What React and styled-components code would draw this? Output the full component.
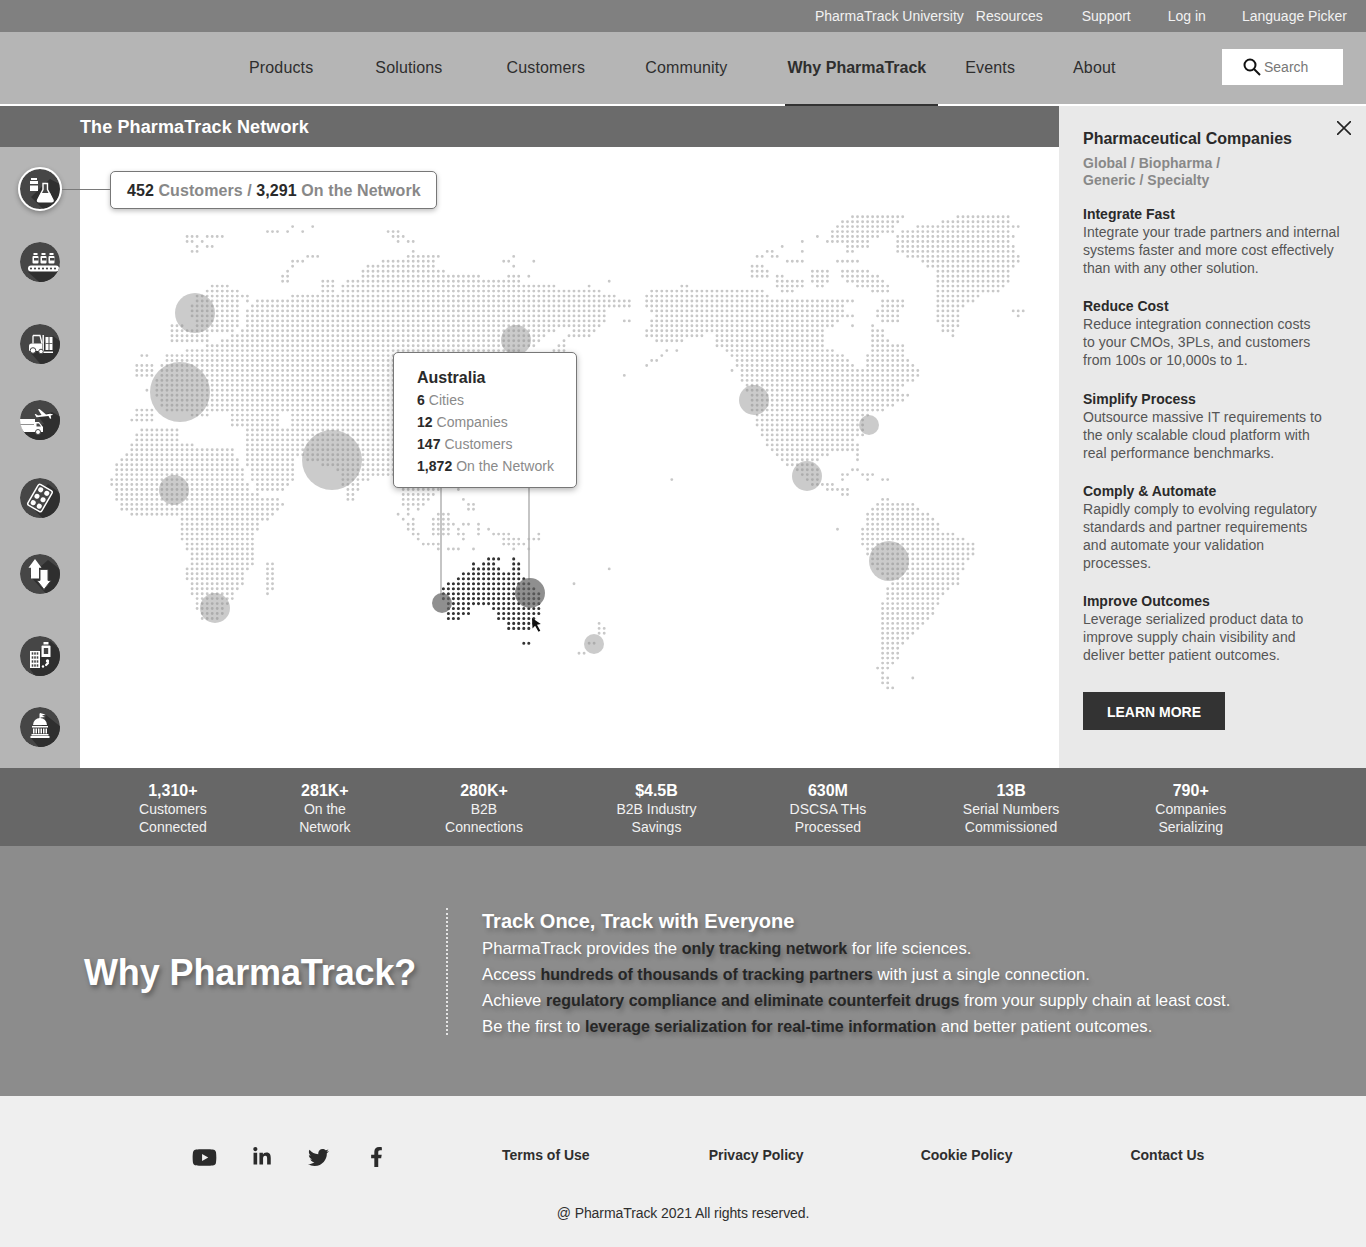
import React, { useMemo } from 'react'
import styled, { createGlobalStyle } from 'styled-components'
import { FaYoutube, FaLinkedinIn, FaTwitter, FaFacebookF } from 'react-icons/fa'

const GlobalStyle = createGlobalStyle`
  html, body {
    margin: 0;
    padding: 0;
    background: #fff;
    font-family: "Liberation Sans", Arial, sans-serif;
  }
  * { box-sizing: border-box; }
`

const Page = styled.div`
  width: 1366px;
  height: 1247px;
  overflow: hidden;
`

/* header */

const TopBar = styled.div`
  display: flex;
  justify-content: flex-end;
  align-items: center;
  height: 32px;
  padding-right: 19px;
  background: #808080;
`

const TopLink = styled.a`
  margin-left: ${props => props.$gap}px;
  font-size: 14px;
  color: #f2f2f2;
`

const NavBar = styled.nav`
  position: relative;
  display: flex;
  align-items: center;
  height: 74px;
  padding-left: 249px;
  background: #b5b5b5;
  border-bottom: 2px solid #fff;
`

const NavItem = styled.a`
  position: relative;
  margin-left: ${props => props.$gap}px;
  font-size: 16px;
  letter-spacing: ${props => (props.$active ? 0 : 0.15)}px;
  font-weight: ${props => (props.$active ? 700 : 400)};
  color: #2e2e2e;

  ${props =>
    props.$active &&
    `
    &::after {
      content: '';
      position: absolute;
      left: -2px;
      right: -12px;
      top: 45px;
      height: 2px;
      background: #333;
    }
  `}
`

const SearchBox = styled.div`
  position: absolute;
  left: 1222px;
  top: 17px;
  display: flex;
  align-items: center;
  gap: 3px;
  width: 121px;
  height: 36px;
  padding-left: 21px;
  background: #fff;
  font-size: 14px;
  color: #777;
`

/* main area */

const Main = styled.div`
  display: grid;
  grid-template-columns: 1059px 307px;
  height: 662px;
`

const NetworkColumn = styled.section`
  display: flex;
  flex-direction: column;
`

const TitleBar = styled.h1`
  display: flex;
  align-items: center;
  height: 41px;
  margin: 0;
  padding: 2px 0 0 80px;
  background: #6b6b6b;
  font-size: 18px;
  letter-spacing: 0.12px;
  font-weight: 700;
  color: #fff;
`

const NetworkBody = styled.div`
  position: relative;
  display: flex;
  flex: 1;
`

const Sidebar = styled.div`
  display: flex;
  flex-direction: column;
  align-items: center;
  width: 80px;
  background: #b5b5b5;
`

const BadgeWrap = styled.div`
  display: flex;
  justify-content: center;
  align-items: center;
  width: 40px;
  height: 40px;
  margin-top: ${props => props.$top}px;
  border-radius: 50%;
  ${props =>
    props.$active &&
    `
    outline: 2px solid #fff;
    box-shadow: 0 2px 5px 2px rgba(0, 0, 0, 0.3);
  `}
`

const Connector = styled.div`
  position: absolute;
  z-index: 1;
  left: 62px;
  top: 42px;
  width: 48px;
  height: 1px;
  background: #7a7a7a;
`

const Canvas = styled.div`
  position: relative;
  flex: 1;
  background: #fff;
`

const MapSvg = styled.svg`
  display: block;
  width: 979px;
  height: 621px;
`

const Callout = styled.div`
  position: absolute;
  left: 30px;
  top: 24px;
  display: flex;
  align-items: center;
  width: 327px;
  height: 38px;
  padding: 1px 0 0 16px;
  background: #fff;
  border: 1px solid #777;
  border-radius: 5px;
  box-shadow: 0 2px 5px rgba(0, 0, 0, 0.25);
  font-size: 16px;
  letter-spacing: 0.08px;
  font-weight: 700;
  color: #888;
`

const Num = styled.span`
  color: #2a2a2a;
  font-weight: 700;
`

const CountryCard = styled.div`
  position: absolute;
  left: 313px;
  top: 205px;
  width: 184px;
  height: 136px;
  padding: 15px 0 0 23px;
  background: #fff;
  border: 1px solid #777;
  border-radius: 5px;
  box-shadow: 0 2px 6px rgba(0, 0, 0, 0.3);
`

const CardTitle = styled.div`
  margin-bottom: 1px;
  font-size: 16px;
  line-height: 20px;
  font-weight: 700;
  color: #2a2a2a;
`

const CardRow = styled.div`
  font-size: 14px;
  line-height: 22px;
  letter-spacing: 0.04px;
  color: #8a8a8a;
`

const DetailPanel = styled.aside`
  position: relative;
  padding: 23px 0 0 24px;
  background: #e9e9e9;
`

const CloseIcon = styled.svg`
  position: absolute;
  right: 15px;
  top: 15px;
  width: 14px;
  height: 14px;
`

const PanelTitle = styled.h2`
  margin: 0;
  font-size: 16px;
  line-height: 20px;
  font-weight: 700;
  color: #2a2a2a;
`

const PanelSub = styled.div`
  margin: 6px 0 16px;
  font-size: 14px;
  line-height: 17px;
  letter-spacing: 0.05px;
  font-weight: 700;
  color: #888;
`

const Benefit = styled.div`
  margin-bottom: ${props => props.$after}px;
  font-size: 14px;
  line-height: 18px;
  letter-spacing: 0.05px;
  color: #555;
`

const BenefitTitle = styled.div`
  font-weight: 700;
  color: #2a2a2a;
  letter-spacing: 0;
`

const LearnMore = styled.button`
  display: block;
  width: 142px;
  height: 38px;
  margin-top: 28px;
  padding: 1px 0 0;
  background: #333;
  border: none;
  font-family: inherit;
  font-size: 14px;
  font-weight: 700;
  color: #fff;
`

/* stats */

const StatsBar = styled.div`
  display: flex;
  height: 78px;
  padding: 14px 0 0 139px;
  background: #676767;
`

const Stat = styled.div`
  margin-left: ${props => props.$gap}px;
  text-align: center;
  font-size: 14px;
  line-height: 18px;
  color: #f2f2f2;
`

const StatValue = styled.div`
  font-size: 16px;
  font-weight: 700;
  color: #fff;
`

/* why section */

const WhySection = styled.section`
  display: flex;
  align-items: flex-start;
  height: 250px;
  padding: 62px 0 0 84px;
  background: #8c8c8c;
`

const WhyTitle = styled.h2`
  width: 362px;
  margin: 44px 0 0;
  font-size: 36px;
  letter-spacing: -0.12px;
  line-height: 42px;
  font-weight: 700;
  color: #fff;
  text-shadow: 2px 3px 5px rgba(0, 0, 0, 0.35);
`

const WhyCopy = styled.div`
  height: 127px;
  padding-left: 34px;
  border-left: 2px dotted #e4e4e4;
  font-size: 16.7px;
  line-height: 26px;
  color: #fff;
  text-shadow: 2px 3px 5px rgba(0, 0, 0, 0.3);
`

const WhyHeading = styled.div`
  margin-bottom: 2px;
  font-size: 20px;
  font-weight: 700;
`

const Strong = styled.span`
  font-size: 16px;
  font-weight: 700;
  color: #262626;
`

/* footer */

const Footer = styled.footer`
  height: 151px;
  padding-top: 49px;
  background: #efefef;
  color: #2e2e2e;
`

const FooterRow = styled.div`
  display: flex;
  align-items: center;
  height: 20px;
  padding-left: 192px;
`

const Social = styled.a`
  display: flex;
  justify-content: center;
  width: ${props => props.$w}px;
  margin-right: ${props => props.$gap}px;
  margin-top: 4px;
  font-size: ${props => props.$size}px;
  color: #2b2b2b;
`

const FooterLink = styled.a`
  margin-left: ${props => props.$gap}px;
  font-size: 14px;
  font-weight: 700;
`

const Copyright = styled.div`
  margin-top: 39px;
  text-align: center;
  font-size: 14px;
  letter-spacing: -0.08px;
  line-height: 18px;
`

/* map data, all in page pixels */

const fromZoom = (ox, oy, pts) => pts.map(([x, y]) => [ox + x / 3, oy + y / 3])

const WEST_POLYGONS = [
  // Scandinavia
  [[195, 297], [210, 285], [228, 285], [250, 295], [250, 303], [240, 300], [240, 330], [212, 335], [208, 342], [170, 345], [166, 332], [175, 322], [195, 330], [190, 310]],
  // Russia, Asia and India
  [[208, 345], [243, 330], [248, 305], [263, 297], [322, 295], [322, 277], [337, 277], [338, 295], [345, 277], [360, 277], [358, 270], [377, 262], [390, 257], [440, 255], [437, 266], [423, 268], [450, 272], [480, 272], [478, 279], [540, 282], [560, 287], [610, 292], [618, 297], [635, 302], [628, 310], [605, 308], [608, 324], [563, 328], [548, 333], [543, 342], [520, 352], [470, 420], [440, 488], [432, 496], [420, 510], [403, 506], [403, 488], [393, 477], [365, 480], [357, 495], [350, 507], [343, 485], [338, 470], [323, 465], [305, 462], [303, 455], [285, 455], [280, 440], [245, 440], [245, 428], [288, 428], [288, 415], [275, 412], [208, 412]],
  [[572, 325], [600, 325], [590, 338], [573, 338]],
  [[228, 410], [278, 410], [278, 427], [228, 427]],
  // Europe
  [[165, 355], [208, 345], [208, 420], [190, 420], [190, 410], [165, 415], [155, 395], [158, 370]],
  [[135, 410], [152, 410], [152, 425], [130, 425]],
  [[132, 365], [152, 365], [152, 378], [132, 375]],
  [[140, 352], [147, 352], [147, 360], [140, 360]],
  // Africa, Arabia, Madagascar
  [[140, 428], [178, 428], [180, 443], [195, 445], [230, 447], [237, 455], [243, 470], [250, 490], [262, 495], [285, 500], [282, 507], [270, 518], [262, 524], [255, 533], [255, 545], [257, 563], [247, 573], [240, 590], [230, 603], [217, 622], [200, 618], [190, 590], [185, 573], [190, 560], [185, 545], [180, 535], [180, 520], [170, 515], [130, 515], [120, 510], [115, 495], [110, 480], [115, 465], [120, 460], [130, 445]],
  [[243, 430], [280, 430], [297, 470], [297, 480], [285, 490], [255, 490], [247, 465]],
  [[265, 563], [276, 563], [276, 580], [270, 595], [264, 595]],
]

// [zoomY, zoomX start, zoomX end], relative to the crop at 380,340
const ISLAND_RUNS = [
  [450, 70, 150], [450, 235, 235], [465, 70, 70], [465, 115, 150], [480, 70, 70], [480, 115, 150], [480, 250, 250],
  [495, 85, 85], [495, 265, 280], [510, 85, 85], [510, 265, 280], [525, 55, 55], [525, 85, 85], [525, 175, 205],
  [540, 70, 70], [540, 100, 100], [540, 160, 205], [552, 85, 100], [552, 160, 220], [552, 250, 265], [552, 295, 295],
  [567, 85, 100], [567, 160, 205], [567, 235, 235], [567, 295, 295], [567, 325, 325], [582, 100, 115], [582, 160, 205],
  [582, 235, 250], [582, 295, 295], [582, 340, 385], [582, 470, 470], [597, 115, 115], [597, 250, 250], [597, 370, 415],
  [597, 445, 475], [612, 130, 160], [612, 175, 175], [612, 370, 430], [627, 175, 175], [627, 205, 235], [627, 280, 280],
  [627, 400, 400], [627, 445, 445], [105, 727, 727], [687, 682, 682], [730, 577, 577], [850, 650, 650], [865, 650, 665],
  [880, 650, 665], [910, 620, 635], [940, 590, 605],
]

const WEST_STRAYS = [
  // northern islands
  ...[[555, 408], [570, 408], [585, 408], [615, 408], [630, 408], [645, 408], [660, 408], [555, 423], [570, 423], [600, 423], [585, 438], [615, 438], [630, 438], [570, 453], [585, 453], [795, 395], [825, 395], [840, 395], [870, 395], [915, 395], [885, 380], [945, 380], [930, 468], [945, 468], [960, 468], [885, 483], [900, 483], [915, 483], [885, 498], [870, 513], [855, 528], [870, 528], [855, 543], [870, 543], [1165, 395], [1180, 395], [1195, 395], [1180, 410], [1195, 410], [1210, 410], [1195, 423], [1225, 423], [1240, 423], [1240, 453]].map(([x, y]) => [x / 3, 100 + y / 3]),
  // east of Siberia
  ...[[370, 125], [385, 125], [400, 110], [400, 140], [460, 125], [385, 170], [400, 170], [415, 170], [445, 170], [695, 185], [620, 200], [740, 302], [755, 302], [560, 350], [575, 350], [545, 365], [530, 380], [545, 380], [515, 395], [530, 395], [545, 395]].map(([x, y]) => [380 + x / 3, 220 + y / 3]),
  [145, 390],
]

const EAST_POLYGONS = [
  // North America
  fromZoom(640, 200, [[15, 285], [30, 268], [145, 255], [150, 268], [365, 268], [395, 285], [390, 300], [620, 300], [620, 345], [575, 380], [560, 385], [560, 450], [575, 450], [605, 465], [635, 480], [650, 510], [680, 495], [690, 375], [740, 390], [745, 420], [790, 430], [800, 475], [830, 495], [845, 520], [830, 545], [790, 560], [760, 580], [810, 585], [790, 605], [740, 630], [700, 640], [680, 660], [670, 710], [650, 720], [660, 750], [620, 755], [590, 750], [545, 775], [530, 780], [530, 790], [545, 850], [600, 855], [635, 875], [630, 900], [600, 880], [570, 870], [510, 860], [480, 820], [435, 795], [405, 765], [390, 745], [360, 710], [345, 660], [330, 620], [315, 555], [285, 495], [270, 465], [225, 435], [225, 405], [160, 410], [135, 410], [125, 425], [50, 425], [15, 410], [20, 380], [45, 345], [15, 330]]),
  // Arctic Canada
  fromZoom(640, 200, [[330, 195], [380, 195], [385, 240], [330, 235]]),
  fromZoom(640, 200, [[405, 225], [500, 240], [490, 270], [420, 280], [405, 260]]),
  fromZoom(640, 200, [[510, 210], [575, 210], [555, 280], [510, 240]]),
  fromZoom(640, 200, [[600, 210], [690, 210], [755, 260], [755, 285], [680, 270], [600, 240]]),
  fromZoom(640, 200, [[540, 290], [650, 290], [640, 305], [540, 300]]),
  fromZoom(640, 200, [[715, 290], [800, 300], [790, 320], [775, 365], [730, 365], [700, 335], [720, 320]]),
  fromZoom(640, 200, [[640, 45], [800, 45], [755, 100], [720, 110], [670, 130], [690, 140], [640, 145], [560, 125], [570, 95], [600, 65]]),
  // Greenland and Iceland
  fromZoom(640, 200, [[940, 35], [1030, 35], [1110, 50], [1105, 65], [1150, 80], [1110, 95], [1135, 110], [1110, 125], [1135, 155], [1135, 185], [1120, 205], [1105, 245], [1080, 275], [1020, 290], [1000, 305], [970, 320], [960, 365], [940, 410], [910, 395], [895, 375], [880, 320], [880, 210], [835, 185], [810, 170], [760, 165], [760, 125], [785, 95], [830, 80], [905, 65], [940, 50]]),
  fromZoom(640, 200, [[1105, 318], [1155, 318], [1155, 335], [1135, 350], [1105, 335]]),
  // South America
  fromZoom(640, 200, [[720, 897], [750, 897], [815, 910], [860, 940], [890, 955], [905, 990], [935, 1000], [975, 1015], [1005, 1030], [1005, 1060], [985, 1080], [965, 1120], [960, 1150], [915, 1180], [900, 1215], [870, 1260], [840, 1285], [825, 1305], [785, 1345], [770, 1390], [740, 1420], [750, 1450], [770, 1465], [735, 1465], [718, 1445], [715, 1410], [700, 1405], [715, 1390], [715, 1285], [730, 1190], [745, 1150], [700, 1100], [660, 1030], [670, 970], [685, 930]]),
]

const EAST_STRAYS = fromZoom(640, 200, [[645, 810], [660, 810], [675, 825], [690, 825], [705, 825], [690, 840], [735, 840], [750, 840], [600, 825], [615, 825], [600, 840], [660, 765], [660, 780], [95, 838], [586, 987], [825, 1433], [645, 378], [645, 348], [630, 348], [430, 140], [420, 140], [380, 155], [390, 155], [350, 170], [365, 170], [395, 170], [405, 170], [435, 185], [450, 185], [465, 185], [480, 185], [480, 155], [490, 125], [525, 110], [585, 185], [600, 185], [615, 185], [630, 185], [645, 185], [660, 185], [615, 155], [630, 155], [645, 155], [22, 495], [35, 480], [50, 480], [65, 465], [80, 450], [110, 450], [272, 510], [305, 540]])

// [zoomY, zoomX start, zoomX end], relative to the crop at 380,340
const AUSTRALIA_RUNS = [
  [658, 325, 355], [658, 400, 400], [672, 280, 280], [672, 310, 340], [672, 400, 415], [687, 280, 355], [687, 400, 415],
  [702, 250, 415], [717, 235, 430], [732, 205, 445], [747, 190, 460], [762, 190, 475], [777, 190, 475], [792, 205, 475],
  [807, 205, 265], [807, 340, 475], [822, 205, 265], [822, 355, 475], [837, 205, 235], [837, 355, 460], [852, 380, 460],
  [867, 380, 445], [912, 430, 445],
]

const ROW = { y0: 216.7, step: 4.96 }
const WEST_COL = { x0: 111.7, step: 5.025 }
const EAST_COL = { x0: 646.7, step: 5.02 }

const inPolygon = (x, y, poly) => {
  let inside = false
  for (let i = 0, j = poly.length - 1; i < poly.length; j = i++) {
    const [xi, yi] = poly[i]
    const [xj, yj] = poly[j]
    if (yi > y !== yj > y && x < ((xj - xi) * (y - yi)) / (yj - yi) + xi) inside = !inside
  }
  return inside
}

const snap = (x, y, col) => {
  const c = Math.round((x - col.x0) / col.step)
  const r = Math.round((y - ROW.y0) / ROW.step)
  return `${c},${r}`
}

const cellsToPath = (cells, col) =>
  [...cells]
    .map(key => {
      const [c, r] = key.split(',').map(Number)
      return `M${(col.x0 + c * col.step).toFixed(1)} ${(ROW.y0 + r * ROW.step).toFixed(1)}h0`
    })
    .join('')

const polygonCells = (polys, col, strays) => {
  const cells = new Set()
  for (let r = 0; r < 96; r++) {
    for (let c = -2; c < 110; c++) {
      const x = col.x0 + c * col.step
      const y = ROW.y0 + r * ROW.step
      if (polys.some(p => inPolygon(x, y, p))) cells.add(`${c},${r}`)
    }
  }
  strays.forEach(([x, y]) => cells.add(snap(x, y, col)))
  return cells
}

const runCells = runs => {
  const cells = new Set()
  runs.forEach(([zy, a, b]) => {
    for (let zx = a; zx <= b; zx += 15) cells.add(snap(380 + zx / 3, 340 + zy / 3, WEST_COL))
  })
  return cells
}

const BUBBLES = [
  [195, 313, 20], [180, 392, 30], [332, 460, 30], [174, 490, 15], [215, 608, 15], [516, 340, 15],
  [754, 400, 15], [869, 425, 10], [807, 476, 15], [889, 561, 20], [594, 644, 10],
]

const WorldMap = () => {
  const paths = useMemo(() => {
    const west = polygonCells(WEST_POLYGONS, WEST_COL, WEST_STRAYS)
    runCells(ISLAND_RUNS).forEach(k => west.add(k))
    return {
      west: cellsToPath(west, WEST_COL),
      east: cellsToPath(polygonCells(EAST_POLYGONS, EAST_COL, EAST_STRAYS), EAST_COL),
      australia: cellsToPath(runCells(AUSTRALIA_RUNS), WEST_COL),
    }
  }, [])

  return (
    <MapSvg viewBox="80 147 979 621">
      <path d={paths.west} stroke="#c8c8c8" strokeWidth="2.9" strokeLinecap="round" />
      <path d={paths.east} stroke="#c8c8c8" strokeWidth="2.9" strokeLinecap="round" />
      <path d={paths.australia} stroke="#333" strokeWidth="3.1" strokeLinecap="round" />
      {BUBBLES.map(([cx, cy, r]) => (
        <circle key={`${cx}-${cy}`} cx={cx} cy={cy} r={r} fill="rgba(137,137,137,0.44)" />
      ))}
      <path d="M441 488V595M529 488V580" stroke="#b3b3b3" strokeWidth="1.5" fill="none" />
      <circle cx="442" cy="603" r="10" fill="rgba(100,100,100,0.72)" />
      <circle cx="530" cy="593" r="15" fill="rgba(100,100,100,0.72)" />
      <path d="M532 618l.5 10.500 2.600-2.800 3.400 6 1.800-1-3.300-6 3.800-.6z" fill="#111" />
    </MapSvg>
  )
}

/* sidebar badges */

const Badge = ({ shadow, children }) => (
  <svg width="40" height="40" viewBox="0 0 40 40">
    <defs>
      <clipPath id="badge-clip">
        <circle cx="20" cy="20" r="20" />
      </clipPath>
    </defs>
    <g clipPath="url(#badge-clip)">
      <circle cx="20" cy="20" r="20" fill="#464646" />
      <path d={shadow} fill="#2f2f2f" />
      {children}
    </g>
  </svg>
)

const BottleFlaskIcon = () => (
  <Badge shadow="M11 28L28 45H45V18L30 10z">
    <path d="M11 9h6v2h-6zM10 12h8v10h-8z" fill="#fff" />
    <path d="M10 15h8v1.500h-8z" fill="#464646" />
    <path d="M23 14.500h4.500v6l5.500 10.500q.6 1.800-1.500 1.800H19q-2 0-1.400-1.800L23 20.500z" fill="#464646" stroke="#fff" strokeWidth="1.400" />
    <path d="M21 24h9l3 7q.4 1.800-1.500 1.800H19q-2 0-1.400-1.800z" fill="#fff" />
  </Badge>
)

const ConveyorIcon = () => (
  <Badge shadow="M8 30L26 46H46V22L38 24z">
    {[12.5, 20.5, 28.5].map(x => (
      <g key={x}>
        <rect x={x + 1} y="11" width="4" height="2" fill="#fff" />
        <rect x={x} y="14" width="6" height="7.500" rx="1" fill="#fff" />
        <rect x={x + 1.5} y="16" width="4.500" height="2.500" fill="#464646" />
      </g>
    ))}
    <rect x="8" y="23.500" width="31" height="6" rx="3" fill="#fff" />
    {[11, 15, 19, 23, 27, 31, 35].map(x => (
      <circle key={x} cx={x} cy="26.500" r="1.100" fill="#464646" />
    ))}
  </Badge>
)

const ForkliftIcon = () => (
  <Badge shadow="M10 28L24 44H44V20L33 12z">
    <path d="M13 11.500h7l2 8" fill="none" stroke="#fff" strokeWidth="1.300" />
    <path d="M13 11.500v8" fill="none" stroke="#fff" strokeWidth="1.300" />
    <path d="M9 22q0-2.500 2.500-2.500H22V27H9z" fill="#fff" />
    <rect x="22.500" y="11" width="1.400" height="18" fill="#fff" />
    <path d="M24 27.500h9V29h-9z" fill="#fff" />
    <path d="M25.500 13h7v13h-7z" fill="#fff" />
    <path d="M28.500 13h1v13h-1zM25.500 19h7v.8h-7z" fill="#464646" />
    <circle cx="13" cy="26.500" r="2.800" fill="#fff" stroke="#464646" />
    <circle cx="21" cy="27.500" r="2.300" fill="#fff" stroke="#464646" />
  </Badge>
)

const PlaneTruckIcon = () => (
  <Badge shadow="M0 32L14 46H46V20L32 12L18 16L24 24z">
    <path d="M33 14.500q-2-1-4.500-.5l-2.500.4-6.500-5.400-1.500.3 3.500 5.800-3.500.5-2.300-1.600-1 .2 1.800 3 12-1.200 1.500 2.800 1.200-.2-.5-3.100q2.500-.5 2.300-1z" fill="#fff" />
    <path d="M0 19h15v3h4l4 5v5H0z" fill="#fff" />
    <path d="M16.500 23.500h2.500l2 3h-4.500z" fill="#464646" />
    <circle cx="18" cy="32" r="2.500" fill="#fff" stroke="#464646" />
    <path d="M0 24.500h14" stroke="#464646" strokeWidth="0.6" />
  </Badge>
)

const BlisterIcon = () => (
  <Badge shadow="M10 27L26 44H46V20L28 6z">
    <g transform="rotate(30 20 20)">
      <rect x="12" y="8" width="16" height="24" rx="2" fill="#464646" stroke="#fff" strokeWidth="1.500" />
      {[12.5, 20, 27.5].map(y =>
        [16.5, 23.5].map(x => <circle key={`${x}-${y}`} cx={x} cy={y} r="2.500" fill="#fff" />),
      )}
    </g>
  </Badge>
)

const ArrowsIcon = () => (
  <Badge shadow="M10 22L30 44H46V20L28 6z">
    <path d="M15 5l-6.500 8.700H11V24.500h8V13.700h2.500z" fill="#fff" />
    <path d="M20 15.500h8V26.500h3l-7 9-7-9h3z" fill="#fff" stroke="#464646" strokeWidth="1" />
  </Badge>
)

const MedsIcon = () => (
  <Badge shadow="M10 33L18 44H46V18L30 5L22 10z">
    <rect x="10" y="15" width="10" height="17" fill="#fff" />
    {[17.5, 21.5, 25.5, 29.5].map(y =>
      [12.5, 15, 17.5].map(x => <rect key={`${x}-${y}`} x={x - 0.8} y={y - 1.2} width="1.600" height="2.400" fill="#464646" />),
    )}
    <path d="M23.500 6h5v2.500h-5z" fill="#fff" />
    <path d="M22.500 9.500h7q1 0 1 1V21h-9V10.500q0-1 1-1z" fill="#fff" />
    <rect x="23.800" y="12" width="4.400" height="6" fill="#464646" />
    <rect x="24.500" y="27" width="5" height="2.200" rx="1.100" transform="rotate(-45 27 28)" fill="#fff" />
    <circle cx="27.500" cy="25" r="1.700" fill="#fff" />
    <circle cx="23" cy="30.500" r="1.200" fill="#fff" />
  </Badge>
)

const CapitolIcon = () => (
  <Badge shadow="M11 31L22 44H46V24L26 8L24 16z">
    <path d="M20 6.500v5.500" stroke="#fff" strokeWidth="1" />
    <path d="M20 6l5.500 1.500L22 8.500l3 1.500-5 .5z" fill="#fff" />
    <path d="M13 18a7 7 0 0 1 14 0z" fill="#fff" />
    <rect x="12" y="19" width="16" height="1.500" fill="#fff" />
    {[13, 15.5, 18, 20.5, 23, 25.5].map(x => (
      <rect key={x} x={x} y="21.500" width="1.500" height="5" fill="#fff" />
    ))}
    <rect x="11.500" y="27" width="17" height="1.500" fill="#fff" />
    <rect x="10.500" y="29" width="19" height="2" fill="#fff" />
  </Badge>
)

const BADGES = [
  { Icon: BottleFlaskIcon, top: 22, active: true },
  { Icon: ConveyorIcon, top: 33 },
  { Icon: ForkliftIcon, top: 42 },
  { Icon: PlaneTruckIcon, top: 36 },
  { Icon: BlisterIcon, top: 38 },
  { Icon: ArrowsIcon, top: 36 },
  { Icon: MedsIcon, top: 42 },
  { Icon: CapitolIcon, top: 31 },
]

const TOP_LINKS = [
  ['PharmaTrack University', 0],
  ['Resources', 12],
  ['Support', 39],
  ['Log in', 37],
  ['Language Picker', 36],
]

const NAV_ITEMS = [
  ['Products', 0],
  ['Solutions', 62],
  ['Customers', 64],
  ['Community', 60],
  ['Why PharmaTrack', 60, true],
  ['Events', 39],
  ['About', 58],
]

const BENEFITS = [
  ['Integrate Fast', 20, ['Integrate your trade partners and internal', 'systems faster and more cost effectively', 'than with any other solution.']],
  ['Reduce Cost', 21, ['Reduce integration connection costs', 'to your CMOs, 3PLs, and customers', 'from 100s or 10,000s to 1.']],
  ['Simplify Process', 20, ['Outsource massive IT requirements to', 'the only scalable cloud platform with', 'real performance benchmarks.']],
  ['Comply & Automate', 20, ['Rapidly comply to evolving regulatory', 'standards and partner requirements', 'and automate your validation', 'processes.']],
  ['Improve Outcomes', 20, ['Leverage serialized product data to', 'improve supply chain visibility and', 'deliver better patient outcomes.']],
]

const STATS = [
  ['1,310+', 'Customers', 'Connected', 0],
  ['281K+', 'On the', 'Network', 92.5],
  ['280K+', 'B2B', 'Connections', 94.5],
  ['$4.5B', 'B2B Industry', 'Savings', 93.5],
  ['630M', 'DSCSA THs', 'Processed', 93],
  ['13B', 'Serial Numbers', 'Commissioned', 96.5],
  ['790+', 'Companies', 'Serializing', 96],
]

const COUNTRY_ROWS = [
  ['6', 'Cities'],
  ['12', 'Companies'],
  ['147', 'Customers'],
  ['1,872', 'On the Network'],
]

const SOCIALS = [
  { Icon: FaYoutube, w: 25, gap: 35, size: 25 },
  { Icon: FaLinkedinIn, w: 20, gap: 36, size: 20 },
  { Icon: FaTwitter, w: 21, gap: 41, size: 21 },
  { Icon: FaFacebookF, w: 13, gap: 0, size: 20 },
]

const FOOTER_LINKS = [
  ['Terms of Use', 119],
  ['Privacy Policy', 119],
  ['Cookie Policy', 117],
  ['Contact Us', 118],
]

const App = () => (
  <Page>
    <GlobalStyle />
    <TopBar>
      {TOP_LINKS.map(([label, gap]) => (
        <TopLink key={label} $gap={gap}>{label}</TopLink>
      ))}
    </TopBar>
    <NavBar>
      {NAV_ITEMS.map(([label, gap, active]) => (
        <NavItem key={label} $gap={gap} $active={active}>{label}</NavItem>
      ))}
      <SearchBox>
        <svg width="18" height="18" viewBox="0 0 18 18" fill="none" stroke="#111" strokeWidth="2">
          <circle cx="7" cy="7" r="5.500" />
          <path d="M11 11l6 6" />
        </svg>
        Search
      </SearchBox>
    </NavBar>
    <Main>
      <NetworkColumn>
        <TitleBar>The PharmaTrack Network</TitleBar>
        <NetworkBody>
          <Sidebar>
            {BADGES.map(({ Icon, top, active }, i) => (
              <BadgeWrap key={i} $top={top} $active={active}>
                <Icon />
              </BadgeWrap>
            ))}
          </Sidebar>
          <Connector />
          <Canvas>
            <WorldMap />
            <Callout>
              <span><Num>452</Num> Customers / <Num>3,291</Num> On the Network</span>
            </Callout>
            <CountryCard>
              <CardTitle>Australia</CardTitle>
              {COUNTRY_ROWS.map(([n, label]) => (
                <CardRow key={label}><Num>{n}</Num> {label}</CardRow>
              ))}
            </CountryCard>
          </Canvas>
        </NetworkBody>
      </NetworkColumn>
      <DetailPanel>
        <CloseIcon viewBox="0 0 14 14" stroke="#222" strokeWidth="1.600">
          <path d="M0 0l14 14M14 0L0 14" />
        </CloseIcon>
        <PanelTitle>Pharmaceutical Companies</PanelTitle>
        <PanelSub>Global / Biopharma /<br />Generic / Specialty</PanelSub>
        {BENEFITS.map(([title, after, lines]) => (
          <Benefit key={title} $after={after}>
            <BenefitTitle>{title}</BenefitTitle>
            {lines.map(line => <div key={line}>{line}</div>)}
          </Benefit>
        ))}
        <LearnMore>LEARN MORE</LearnMore>
      </DetailPanel>
    </Main>
    <StatsBar>
      {STATS.map(([value, a, b, gap]) => (
        <Stat key={value} $gap={gap}>
          <StatValue>{value}</StatValue>
          <div>{a}</div>
          <div>{b}</div>
        </Stat>
      ))}
    </StatsBar>
    <WhySection>
      <WhyTitle>Why PharmaTrack?</WhyTitle>
      <WhyCopy>
        <WhyHeading>Track Once, Track with Everyone</WhyHeading>
        <div>PharmaTrack provides the <Strong>only tracking network</Strong> for life sciences.</div>
        <div>Access <Strong>hundreds of thousands of tracking partners</Strong> with just a single connection.</div>
        <div>Achieve <Strong>regulatory compliance and eliminate counterfeit drugs</Strong> from your supply chain at least cost.</div>
        <div>Be the first to <Strong>leverage serialization for real-time information</Strong> and better patient outcomes.</div>
      </WhyCopy>
    </WhySection>
    <Footer>
      <FooterRow>
        {SOCIALS.map(({ Icon, w, gap, size }, i) => (
          <Social key={i} $w={w} $gap={gap} $size={size}><Icon /></Social>
        ))}
        {FOOTER_LINKS.map(([label, gap]) => (
          <FooterLink key={label} $gap={gap}>{label}</FooterLink>
        ))}
      </FooterRow>
      <Copyright>@ PharmaTrack 2021 All rights reserved.</Copyright>
    </Footer>
  </Page>
)

export default App
